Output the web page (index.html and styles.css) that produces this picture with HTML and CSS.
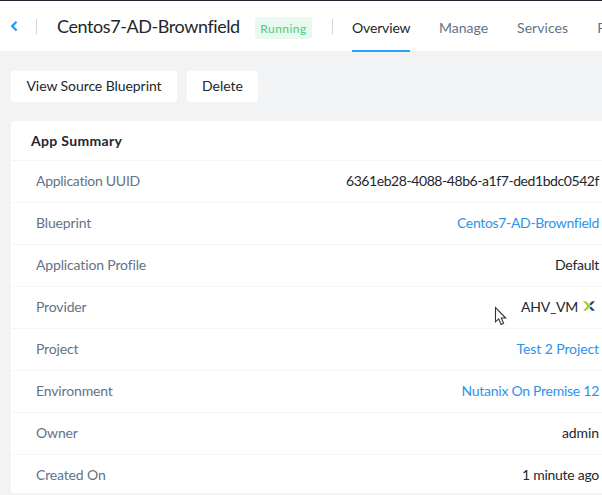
FILE: index.html
```
<!DOCTYPE html>
<html lang="en">
<head>
<meta charset="utf-8">
<title>Centos7-AD-Brownfield</title>
<link rel="stylesheet" href="styles.css">
</head>
<body>
<header class="header">
  <svg class="back" width="8" height="12" viewBox="0 0 8 12"><path d="M6.6 1.7 2.1 6.1l4.5 4.4"/></svg>
  <span class="divider"></span>
  <h1 class="title">Centos7-AD-Brownfield</h1>
  <span class="status">Running</span>
  <span class="divider divider-tabs"></span>
  <nav class="tabs">
    <a class="tab active">Overview</a>
    <a class="tab manage">Manage</a>
    <a class="tab services">Services</a>
    <a class="tab policies">Policies</a>
  </nav>
</header>
<main class="main">
  <div class="actions">
    <button class="button source">View Source Blueprint</button>
    <button class="button delete">Delete</button>
  </div>
  <section class="card">
    <h2 class="card-title">App Summary</h2>
    <dl class="rows">
      <div class="row"><dt class="uuid-label">Application UUID</dt><dd class="uuid">6361eb28-4088-48b6-a1f7-ded1bdc0542f</dd></div>
      <div class="row"><dt>Blueprint</dt><dd class="link blueprint">Centos7-AD-Brownfield</dd></div>
      <div class="row"><dt>Application Profile</dt><dd>Default</dd></div>
      <div class="row"><dt>Provider</dt><dd class="provider"><span>AHV_VM</span><svg class="logo" width="12" height="10" viewBox="0 0 12 10"><path class="green" d="M0 .3h3L7.7 5 3 9.7H0L4.4 5z"/><path class="navy" d="M12 .3H9L6.3 3l1.7 1.6zM12 9.7H9L6.3 7 8 5.4z"/></svg></dd></div>
      <div class="row"><dt>Project</dt><dd class="link project">Test 2 Project</dd></div>
      <div class="row"><dt>Environment</dt><dd class="link premise">Nutanix On Premise 12</dd></div>
      <div class="row"><dt>Owner</dt><dd class="owner">admin</dd></div>
      <div class="row"><dt>Created On</dt><dd>1 minute ago</dd></div>
    </dl>
  </section>
</main>
<svg class="cursor" width="13" height="20" viewBox="0 0 13 20"><path d="M1.5 1.5v14.3l3.2-2.9 2.4 5.5 2.5-1.1-2.4-5.3h4.5z"/></svg>
</body>
</html>
```
FILE: styles.css
```
* { box-sizing: border-box; }
body {
  margin: 0;
  height: 495px;
  overflow: hidden;
  background: #f2f3f5;
  color: #22272e;
  font: 14px/20px Lato, "Open Sans", sans-serif;
}
h1, h2, dl, dd { margin: 0; font-weight: 400; }
.header {
  display: flex;
  align-items: flex-start;
  height: 51px;
  border-top: 1px solid #22252f;
  background: #fff;
  white-space: nowrap;
}
.back { flex: none; margin: 19px 0 0 10px; }
.back path { fill: none; stroke: #1b9cf5; stroke-width: 2.2; }
.divider { flex: none; width: 1px; height: 15px; margin: 18px 0 0 18px; background: #d0d5dc; }
.title { flex: none; width: 198px; margin: 11px 0 0 20px; font-size: 18px; line-height: 28px; letter-spacing: -.42px; }
.status {
  flex: none;
  width: 57px;
  height: 22px;
  margin-top: 16px;
  border-radius: 3px;
  background: #e9f9ef;
  color: #4fcb7b;
  font-size: 12px;
  line-height: 23px;
  text-align: center;
  letter-spacing: .45px;
}
.divider-tabs { margin-left: 20px; }
.tabs { display: flex; flex: 1; min-width: 0; height: 51px; gap: 29px; margin-left: 19px; overflow: hidden; }
.tab { flex: none; height: 51px; padding-top: 17px; color: #627386; }
.tab.active { width: 58px; color: #22272e; border-bottom: 2px solid #22a5f7; letter-spacing: -.15px; }
.services { letter-spacing: .05px; }
.main { padding: 20px 0 0 11px; }
.actions { display: flex; gap: 10px; }
.button {
  height: 31px;
  padding: 0 0 2px;
  border: 0;
  border-radius: 3px;
  background: #fff;
  color: #22272e;
  font: inherit;
}
.source { width: 166px; letter-spacing: -.07px; }
.delete { width: 71px; }
.card { height: 372px; margin-top: 19px; border-radius: 3px 0 0 3px; background: #fff; }
.card-title { height: 39px; padding: 10px 20px; font-size: 14px; font-weight: 700; letter-spacing: .33px; }
.row {
  display: flex;
  justify-content: space-between;
  height: 42px;
  padding: 10px 3px 0 25px;
  border-top: 1px solid #f4f5f7;
}
dt { color: #627386; letter-spacing: -.15px; }
dd { letter-spacing: -.27px; }
.uuid-label { letter-spacing: -.27px; }
.uuid { letter-spacing: -.43px; }
.link { color: #2d92ed; }
.blueprint { letter-spacing: -.33px; }
.project { letter-spacing: -.1px; }
.owner { letter-spacing: -.1px; }
.provider { display: flex; padding-right: 4px; }
.logo { margin: 4px 0 0 5px; }
.green { fill: #a5cd39; }
.navy { fill: #174a86; }
.cursor { position: absolute; left: 494px; top: 306px; }
.cursor path { fill: #fff; stroke: #333; stroke-width: 1.1; }
```
